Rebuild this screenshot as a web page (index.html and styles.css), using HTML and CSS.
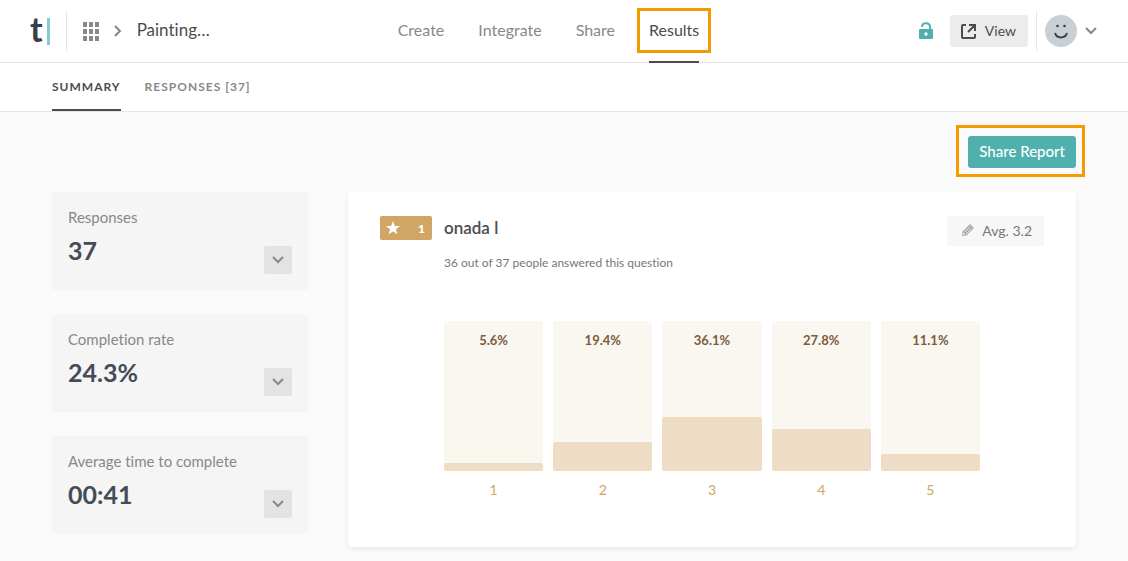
FILE: index.html
```html
<!DOCTYPE html>
<html lang="en">
<head>
  <meta charset="UTF-8" />
  <meta name="viewport" content="width=device-width, initial-scale=1.0" />
  <title>Results</title>
  <link rel="stylesheet" href="styles.css">
</head>
<body>
  <header class="header">
    <div class="header-left">
      <a class="logo" href="#" aria-label="Home"><span class="logo-letter">t</span><span class="logo-bar"></span></a>
      <div class="crumbs">
        <a class="crumb-icon" href="#" aria-label="Workspace">
          <svg width="16" height="19" viewBox="0 0 16 19" fill="#888">
            <path d="M0 0h4v5h-4zM6 0h4v5h-4zM12 0h4v5h-4zM0 7h4v5h-4zM6 7h4v5h-4zM12 7h4v5h-4zM0 14h4v5h-4zM6 14h4v5h-4zM12 14h4v5h-4z" />
          </svg>
        </a>
        <svg width="8" height="12" viewBox="0 0 8 12" fill="none" stroke="#888" stroke-width="2">
          <path d="M1 1l5 5-5 5" />
        </svg>
        <a class="form-name" href="#">Painting…</a>
      </div>
    </div>

    <nav class="nav">
      <a href="#">Create</a>
      <a href="#">Integrate</a>
      <a href="#">Share</a>
      <a class="active" href="#">Results</a>
    </nav>

    <div class="header-right">
      <svg class="lock" width="14" height="18" viewBox="0 0 14 18">
        <path d="M3 5C3 0 11 0 11 5v3" fill="none" stroke="#4fb0ae" stroke-width="2" />
        <path fill="#4fb0ae" fill-rule="evenodd" d="M1 7h12q1 0 1 1v8q0 1-1 1H1q-1 0-1-1V8q0-1 1-1zM7 10.300a1.700 1.700 0 1 0 .01 0z" />
      </svg>
      <button class="view-btn">
        <svg width="15" height="15" viewBox="0 0 15 15" fill="none" stroke="#4c4c4c" stroke-width="2">
          <path d="M5 1H2Q1 1 1 2v11q0 1 1 1h11q1 0 1-1v-3M8 1h6v6M13.500 1.500L7 8" />
        </svg>
        <span>View</span>
      </button>
      <button class="account" aria-label="Account">
        <svg width="32" height="32" viewBox="0 0 32 32">
          <circle cx="16" cy="16" r="16" fill="#c8d0d4" />
          <circle cx="12.500" cy="11" r="1.300" fill="#37404a" />
          <circle cx="19.500" cy="11" r="1.300" fill="#37404a" />
          <path d="M10 18c2 6 10 6 12 0" fill="none" stroke="#37404a" stroke-width="2" />
        </svg>
        <svg width="12" height="8" viewBox="0 0 12 8" fill="none" stroke="#888" stroke-width="2">
          <path d="M1 1l5 5 5-5" />
        </svg>
      </button>
    </div>
  </header>

  <nav class="tabs">
    <a class="active" href="#">SUMMARY</a>
    <a href="#">RESPONSES [37]</a>
  </nav>

  <main class="page">
    <div class="toolbar">
      <button class="share-btn">Share Report</button>
    </div>

    <div class="columns">
      <aside class="stats">
        <section class="stat">
          <div>
            <h2>Responses</h2>
            <p>37</p>
          </div>
          <button class="toggle" aria-label="Show responses">
            <svg width="12" height="8" viewBox="0 0 12 8" fill="none" stroke="#888" stroke-width="2"><path d="M1 1l5 5 5-5" /></svg>
          </button>
        </section>
        <section class="stat">
          <div>
            <h2>Completion rate</h2>
            <p>24.3%</p>
          </div>
          <button class="toggle" aria-label="Show completion rate">
            <svg width="12" height="8" viewBox="0 0 12 8" fill="none" stroke="#888" stroke-width="2"><path d="M1 1l5 5 5-5" /></svg>
          </button>
        </section>
        <section class="stat">
          <div>
            <h2>Average time to complete</h2>
            <p>00:41</p>
          </div>
          <button class="toggle" aria-label="Show average time">
            <svg width="12" height="8" viewBox="0 0 12 8" fill="none" stroke="#888" stroke-width="2"><path d="M1 1l5 5 5-5" /></svg>
          </button>
        </section>
      </aside>

      <section class="card">
        <div class="question">
          <div class="badge">
            <svg width="14" height="14" viewBox="0 0 14 14" fill="#fff">
              <path d="M7 0l1.800 4.900 5.200.2-4.100 3.200 1.400 5L7 10.400l-4.300 2.900 1.400-5L0 5.100l5.200-.2z" />
            </svg>
            <span>1</span>
          </div>
          <div class="question-text">
            <h1>onada l</h1>
            <p>36 out of 37 people answered this question</p>
          </div>
          <div class="average">
            <svg width="12" height="12" viewBox="0 0 12 12">
              <path fill="#aaa" d="M8 0l4 4-7.500 7.500L0 12l.5-4.500z" />
              <path d="M2.500 8l5.500-5.500M4.300 9.800l5.500-5.500" stroke="#f7f7f7" stroke-width=".8" />
              <path fill="#f7f7f7" d="M1.300 8.500l2 2-2.300.5z" />
            </svg>
            Avg. 3.2
          </div>
        </div>

        <div class="chart">
          <div class="col">
            <div class="track"><span>5.6%</span><div class="bar" style="height: 5.6%"></div></div>
            <div class="label">1</div>
          </div>
          <div class="col">
            <div class="track"><span>19.4%</span><div class="bar" style="height: 19.4%"></div></div>
            <div class="label">2</div>
          </div>
          <div class="col">
            <div class="track"><span>36.1%</span><div class="bar" style="height: 36.1%"></div></div>
            <div class="label">3</div>
          </div>
          <div class="col">
            <div class="track"><span>27.8%</span><div class="bar" style="height: 27.8%"></div></div>
            <div class="label">4</div>
          </div>
          <div class="col">
            <div class="track"><span>11.1%</span><div class="bar" style="height: 11.1%"></div></div>
            <div class="label">5</div>
          </div>
        </div>
      </section>
    </div>
  </main>
</body>
</html>
```

FILE: styles.css
```css
* {
  box-sizing: border-box;
}
body {
  margin: 0;
  font-family: Lato, sans-serif;
  font-size: 14px;
  font-variant-ligatures: none;
  color: #4c4c4c;
  background: #fafafa;
}
h1, h2, p {
  margin: 0;
}
a {
  color: inherit;
  text-decoration: none;
}
button {
  border: none;
  padding: 0;
  font: inherit;
  color: inherit;
  background: none;
  cursor: pointer;
}
svg {
  display: block;
  flex: none;
}

/* header */
.header {
  display: grid;
  grid-template-columns: 1fr auto 1fr;
  align-items: center;
  height: 63px;
  padding-right: 31px;
  background: #fff;
  border-bottom: 1px solid #e5e5e5;
  font-size: 16px;
}
.header-left, .header-right {
  display: flex;
  align-items: center;
}
.header-right {
  justify-content: flex-end;
}
.logo {
  display: flex;
  align-items: center;
  gap: 4px;
  padding: 0 16px 0 30px;
}
.logo-letter {
  font-size: 34px;
  line-height: 40px;
  font-weight: 700;
  color: #37404a;
  padding-bottom: 4px;
}
.logo-bar {
  width: 3px;
  height: 27px;
  background: #85cccb;
}
.crumbs {
  display: flex;
  align-items: center;
  gap: 15px;
  height: 40px;
  padding-left: 16px;
  border-left: 1px solid #e5e5e5;
}
.form-name {
  font-size: 17px;
  line-height: 24px;
  padding-bottom: 2px;
}
.nav {
  display: flex;
  gap: 34px;
  color: #888;
}
.nav a {
  position: relative;
  line-height: 59px;
  padding-bottom: 2px;
  margin-bottom: -1px;
  border-bottom: 2px solid transparent;
}
.nav .active {
  color: #4c4c4c;
  border-bottom-color: #4c4c4c;
}
.nav .active::after {
  content: "";
  position: absolute;
  inset: 8px -12px 8px -12px;
  border: 3px solid #f39c00;
}
.view-btn {
  display: flex;
  align-items: center;
  gap: 9px;
  height: 32px;
  margin: 0 8px 0 17px;
  padding: 0 12px 0 11px;
  background: #ececec;
  border-radius: 3px;
  font-size: 14px;
}
.view-btn span {
  padding-bottom: 2px;
}
.account {
  display: flex;
  align-items: center;
  gap: 8px;
  height: 40px;
  padding-left: 8px;
  border-left: 1px solid #e5e5e5;
}

/* tabs */
.tabs {
  display: flex;
  gap: 24px;
  height: 49px;
  padding: 0 52px;
  background: #fff;
  border-bottom: 1px solid #e5e5e5;
  font-size: 12px;
  font-weight: 700;
  letter-spacing: 1px;
  color: #888;
}
.tabs a {
  line-height: 47px;
}
.tabs .active {
  color: #4c4c4c;
  border-bottom: 2px solid #4c4c4c;
}

/* page */
.page {
  padding: 24px 52px 14px;
}
.toolbar {
  display: flex;
  justify-content: flex-end;
  margin-bottom: 24px;
}
.share-btn {
  position: relative;
  height: 32px;
  padding: 0 11px 2px;
  border-radius: 3px;
  background: #4fb0ae;
  color: #fff;
  font-size: 15px;
  font-weight: 500;
}
.share-btn::after {
  content: "";
  position: absolute;
  inset: -11px -9px -9px -12px;
  border: 3px solid #f39c00;
}
.columns {
  display: grid;
  grid-template-columns: 256px 1fr;
  gap: 40px;
}
.stats {
  display: flex;
  flex-direction: column;
  gap: 24px;
}
.stat {
  display: flex;
  justify-content: space-between;
  align-items: flex-end;
  padding: 15px 16px 16px;
  background: #f5f5f5;
  border-radius: 3px;
}
.stat h2 {
  font-size: 15px;
  line-height: 20px;
  font-weight: 400;
  color: #888;
}
.stat p {
  padding: 7px 0 8px;
  font-size: 25px;
  line-height: 32px;
  font-weight: 700;
  color: #434c57;
}
.toggle {
  display: grid;
  place-items: center;
  width: 28px;
  height: 28px;
  background: #e3e3e3;
  border-radius: 2px;
}
.card {
  padding: 24px 32px 47px;
  background: #fff;
  border-radius: 3px;
  box-shadow: 0 2px 4px rgba(0, 0, 0, 0.07);
}
.question {
  display: flex;
  align-items: flex-start;
  gap: 12px;
}
.badge {
  display: flex;
  justify-content: space-between;
  align-items: center;
  width: 52px;
  height: 24px;
  padding: 0 7px 0 6px;
  border-radius: 2px;
  background: #d1a564;
  color: #fff;
  font-size: 12px;
  font-weight: 900;
}
.question-text {
  flex: 1;
}
.question-text h1 {
  font-size: 17px;
  line-height: 24px;
  font-weight: 600;
}
.question-text p {
  margin-top: 13px;
  font-size: 12px;
  line-height: 20px;
  color: #777;
}
.average {
  display: flex;
  align-items: center;
  gap: 8px;
  height: 30px;
  padding: 0 12px 2px 15px;
  background: #f7f7f7;
  color: #777;
}
.chart {
  display: grid;
  grid-template-columns: repeat(5, 1fr);
  gap: 10px;
  margin: 48px 64px 0;
  text-align: center;
}
.track {
  display: flex;
  flex-direction: column;
  justify-content: space-between;
  height: 150px;
  background: #faf7f0;
  border-radius: 3px;
  color: #7a5c3e;
  font-size: 13px;
  line-height: 38px;
  font-weight: 700;
}
.bar {
  background: #eeddc4;
  border-radius: 2px;
}
.label {
  padding-top: 9px;
  line-height: 20px;
  color: #d1a564;
}
```
